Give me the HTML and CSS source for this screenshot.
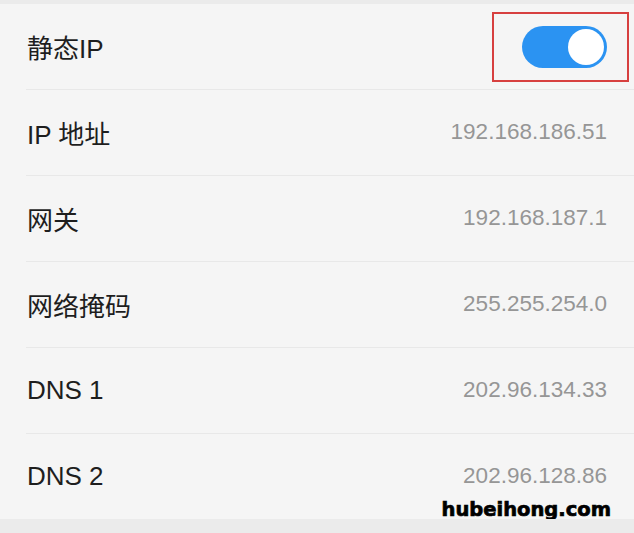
FILE: index.html
```html
<!DOCTYPE html>
<html lang="zh-CN">
<head>
  <meta charset="UTF-8" />
  <title>静态IP</title>
  <link rel="stylesheet" href="styles.css">
</head>
<body>

  <div class="lista">
    <div class="linha">
      <span class="rotulo">静态IP</span>
      <div class="chave">
        <div class="bolinha"></div>
        <div class="marca"></div>
      </div>
    </div>
    <div class="linha">
      <span class="rotulo">IP 地址</span>
      <span class="valor">192.168.186.51</span>
    </div>
    <div class="linha">
      <span class="rotulo">网关</span>
      <span class="valor">192.168.187.1</span>
    </div>
    <div class="linha">
      <span class="rotulo">网络掩码</span>
      <span class="valor">255.255.254.0</span>
    </div>
    <div class="linha">
      <span class="rotulo">DNS 1</span>
      <span class="valor">202.96.134.33</span>
    </div>
    <div class="linha ultima">
      <span class="rotulo">DNS 2</span>
      <span class="valor">202.96.128.86</span>
      <div class="selo">hubeihong.com</div>
    </div>
  </div>

</body>
</html>
```

FILE: styles.css
```css
body {
  margin: 0;
  padding: 0;
  background: #ebebeb;
  font-family: "Liberation Sans", "Noto Sans CJK SC", sans-serif;
  overflow: hidden;
}

.lista {
  margin-top: 4px;
  background: #f5f5f5;
  padding-left: 26px;
}

.linha {
  position: relative;
  display: flex;
  justify-content: space-between;
  align-items: center;
  height: 85px;
  padding-right: 27px;
  border-bottom: 1px solid #e8e8e8;
}

.linha.ultima {
  border-bottom: none;
}

.rotulo {
  font-size: 26px;
  color: #1e1e1e;
  padding-left: 1px;
  margin-top: -1px;
}

.valor {
  font-size: 22.5px;
  color: #969696;
  margin-top: -1px;
}

/* Interruptor */
.chave {
  position: relative;
  width: 85px;
  height: 42px;
  border-radius: 21px;
  background: #2b93f2;
}

.bolinha {
  position: absolute;
  top: 3px;
  right: 3px;
  width: 36px;
  height: 36px;
  border-radius: 50%;
  background: #fff;
}

/* Moldura vermelha */
.marca {
  position: absolute;
  top: -14px;
  bottom: -14px;
  left: -30px;
  right: -22px;
  border: 2px solid #d7403f;
}

/* Marca d'água */
.selo {
  position: absolute;
  right: 23px;
  bottom: -2px;
  font-family: "DejaVu Sans", sans-serif;
  font-weight: bold;
  font-size: 19.5px;
  color: #000;
  -webkit-text-stroke: 0.7px #000;
}
```
